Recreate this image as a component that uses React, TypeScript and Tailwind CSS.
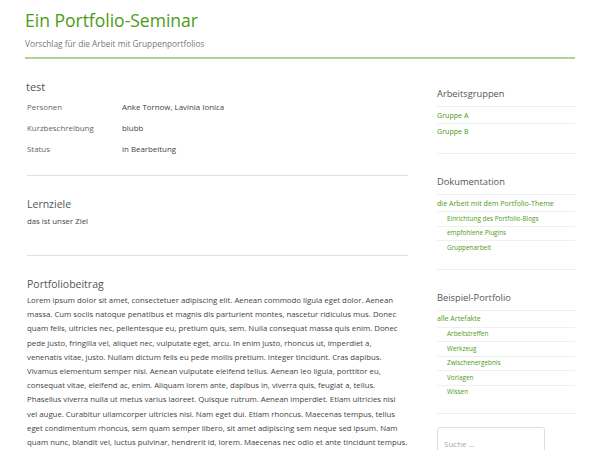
const loremParts = [
  'Lorem ipsum dolor sit amet, consectetuer adipiscing elit. Aenean commodo ligula eget dolor. Aenean massa. Cum sociis natoque penatibus et magnis dis parturient montes, nascetur ridiculus mus. Donec quam felis, ultricies nec, pellentesque eu, pretium quis, sem. Nulla consequat massa quis enim. Donec pede justo, fringilla vel, aliquet nec, vulputate eget, arcu. In enim justo, rhoncus ut, imperdiet a,',
  'venenatis vitae, justo. Nullam dictum felis eu pede mollis pretium. Integer tincidunt. Cras dapibus. Vivamus elementum semper nisi. Aenean vulputate eleifend tellus. Aenean leo ligula, porttitor eu, consequat vitae, eleifend ac, enim. Aliquam lorem ante, dapibus in, viverra quis, feugiat a, tellus. Phasellus viverra nulla ut metus varius laoreet. Quisque rutrum. Aenean imperdiet. Etiam ultricies nisi',
  'vel augue. Curabitur ullamcorper ultricies nisi. Nam eget dui. Etiam rhoncus. Maecenas tempus, tellus eget condimentum rhoncus, sem quam semper libero, sit amet adipiscing sem neque sed ipsum. Nam quam nunc, blandit vel, luctus pulvinar, hendrerit id, lorem. Maecenas nec odio et ante tincidunt tempus.',
];

const fields = [
  ['Personen', 'Anke Tornow, Lavinia Ionica'],
  ['Kurzbeschreibung', 'blubb'],
  ['Status', 'in Bearbeitung'],
];

type Item = { label: string; sub?: boolean };

function Widget({ title, items, className }: { title: string; items: Item[]; className?: string }) {
  return (
    <div className={`border-b border-[#eeeeee] pb-[14px] ${className ?? ''}`}>
      <h3 className="text-[9.3px] leading-[13px] text-[#555] pb-[6px] border-b border-[#eeeeee]">{title}</h3>
      <ul>
        {items.map((item, i) => (
          <li
            key={item.label}
            className={`${i > 0 ? 'border-t border-[#f0f0f0]' : ''} ${
              item.sub ? 'pl-[10px] text-[6.4px] h-[14.5px]' : 'text-[7.1px] h-[16px]'
            } flex items-center whitespace-nowrap text-[#4f9a16]`}
          >
            {item.label}
          </li>
        ))}
      </ul>
    </div>
  );
}

export default function App() {
  return (
    <div className="w-[600px] h-[450px] overflow-hidden bg-white font-['Open_Sans',sans-serif] px-[25px]">
      {/* Header */}
      <header className="pt-[9px] pb-[7px] border-b-2 border-[#aed691]">
        <h1 className="text-[17.5px] leading-[22px] text-[#4a9c14]">Ein Portfolio-Seminar</h1>
        <p className="text-[8.3px] leading-[12px] mt-[7px] text-[#777]">Vorschlag für die Arbeit mit Gruppenportfolios</p>
      </header>

      <div className="flex">
        {/* Main column */}
        <main className="w-[381px] ml-[2px] text-[#444]">
          <section className="pt-[21px] pb-[15px] border-b border-[#d9e8d0]">
            <h2 className="text-[11px] leading-[14px] -ml-[1px] text-[#555]">test</h2>
            <table className="mt-[3px] text-[7.9px]">
              <tbody>
                {fields.map(([k, v]) => (
                  <tr key={k} className="h-[21px]">
                    <td className="w-[95px] text-[#666]">{k}</td>
                    <td>{v}</td>
                  </tr>
                ))}
              </tbody>
            </table>
          </section>

          <section className="pt-[21px] pb-[28px] border-b border-[#d9e8d0]">
            <h2 className="text-[10.5px] leading-[14px] text-[#555]">Lernziele</h2>
            <p className="text-[7.8px] leading-[12px] mt-[4px]">das ist unser Ziel</p>
          </section>

          <section className="pt-[21px]">
            <h2 className="text-[10.5px] leading-[14px] text-[#555]">Portfoliobeitrag</h2>
            <p className="text-[7.8px] leading-[14.2px] mt-[2px] w-[383px]">
              {loremParts[0]}
              <br />
              {loremParts[1]}
              <br />
              {loremParts[2]}
            </p>
          </section>
        </main>

        {/* Sidebar */}
        <aside className="w-[138px] ml-[29px] pt-[28px]">
          <Widget title="Arbeitsgruppen" items={[{ label: 'Gruppe A' }, { label: 'Gruppe B' }]} />
          <Widget
            className="mt-[21px]"
            title="Dokumentation"
            items={[
              { label: 'die Arbeit mit dem Portfolio-Theme' },
              { label: 'Einrichtung des Portfolio-Blogs', sub: true },
              { label: 'empfohlene Plugins', sub: true },
              { label: 'Gruppenarbeit', sub: true },
            ]}
          />
          <Widget
            className="mt-[21px]"
            title="Beispiel-Portfolio"
            items={[
              { label: 'alle Artefakte' },
              { label: 'Arbeitstreffen', sub: true },
              { label: 'Werkzeug', sub: true },
              { label: 'Zwischenergebnis', sub: true },
              { label: 'Vorlagen', sub: true },
              { label: 'Wissen', sub: true },
            ]}
          />
          <input
            type="search"
            placeholder="Suche …"
            className="mt-[13px] w-[108px] h-[32px] border border-[#dddddd] rounded-[3px] px-[6px] text-[8px] text-[#555] placeholder-[#aaa] outline-none"
          />
        </aside>
      </div>
    </div>
  );
}
